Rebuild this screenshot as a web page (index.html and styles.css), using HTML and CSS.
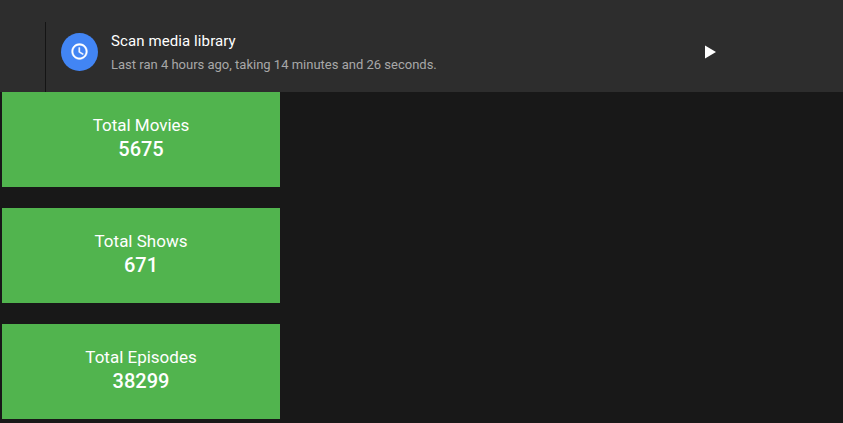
FILE: index.html
```html
<!DOCTYPE html>
<html lang="en">
<head>
<meta charset="utf-8">
<title>Scan media library</title>
<link rel="stylesheet" href="styles.css">
</head>
<body>
<header class="panel">
  <div class="task">
    <div class="avatar">
      <svg width="19" height="19" viewBox="0 0 24 24" fill="#fff" stroke="#fff" stroke-width="0.5"><path d="M11.99 2C6.47 2 2 6.48 2 12s4.47 10 9.99 10C17.52 22 22 17.52 22 12S17.52 2 11.99 2zM12 20c-4.42 0-8-3.58-8-8s3.58-8 8-8 8 3.58 8 8-3.58 8-8 8zm.5-13H11v6l5.25 3.15.75-1.23-4.5-2.67z"/></svg>
    </div>
    <div class="task-text">
      <div class="task-title">Scan media library</div>
      <div class="task-sub">Last ran 4 hours ago, taking 14 minutes and 26 seconds.</div>
    </div>
    <svg class="play" width="24" height="24" viewBox="0 0 24 24" fill="#fff"><path d="M8 5.5v13l11-6.5z"/></svg>
  </div>
</header>
<main class="stats">
  <section class="card"><div class="label">Total Movies</div><div class="value">5675</div></section>
  <section class="card"><div class="label">Total Shows</div><div class="value">671</div></section>
  <section class="card"><div class="label">Total Episodes</div><div class="value">38299</div></section>
</main>
</body>
</html>
```
FILE: styles.css
```css
html, body {
  margin: 0;
  padding: 0;
  height: 100%;
  overflow: hidden;
}
body {
  background: #181818;
  color: #fff;
  font-family: Roboto, "Liberation Sans", sans-serif;
}
.panel {
  height: 92px;
  background: #2d2d2d;
  padding-top: 22px;
  padding-left: 45px;
  box-sizing: border-box;
}
.task {
  width: 701px;
  height: 70px;
  box-sizing: border-box;
  border-left: 1px solid #141414;
  display: flex;
  align-items: center;
  padding-left: 15px;
  padding-bottom: 11px;
}
.avatar {
  width: 37px;
  height: 38px;
  border-radius: 50%;
  background: #4285f4;
  display: flex;
  align-items: center;
  justify-content: center;
  flex: none;
}
.task-text {
  margin-left: 13px;
  margin-top: 2px;
  flex: 1;
}
.task-title {
  font-size: 15px;
  line-height: 20px;
  font-weight: 400;
  letter-spacing: 0.1px;
}
.task-sub {
  font-size: 13px;
  line-height: 20px;
  margin-top: 4px;
  color: #a8a8a8;
}
.play {
  flex: none;
  margin-right: 25px;
  margin-top: 1px;
}
.stats {
  display: flex;
  flex-direction: column;
  gap: 21px;
  padding-left: 2px;
}
.card {
  width: 278px;
  height: 95px;
  box-sizing: border-box;
  padding-bottom: 5px;
  background: #51b44e;
  display: flex;
  flex-direction: column;
  align-items: center;
  justify-content: center;
  text-align: center;
}
.label {
  font-size: 17px;
  line-height: 24px;
}
.value {
  font-size: 20px;
  line-height: 24px;
  font-weight: 500;
}
```
